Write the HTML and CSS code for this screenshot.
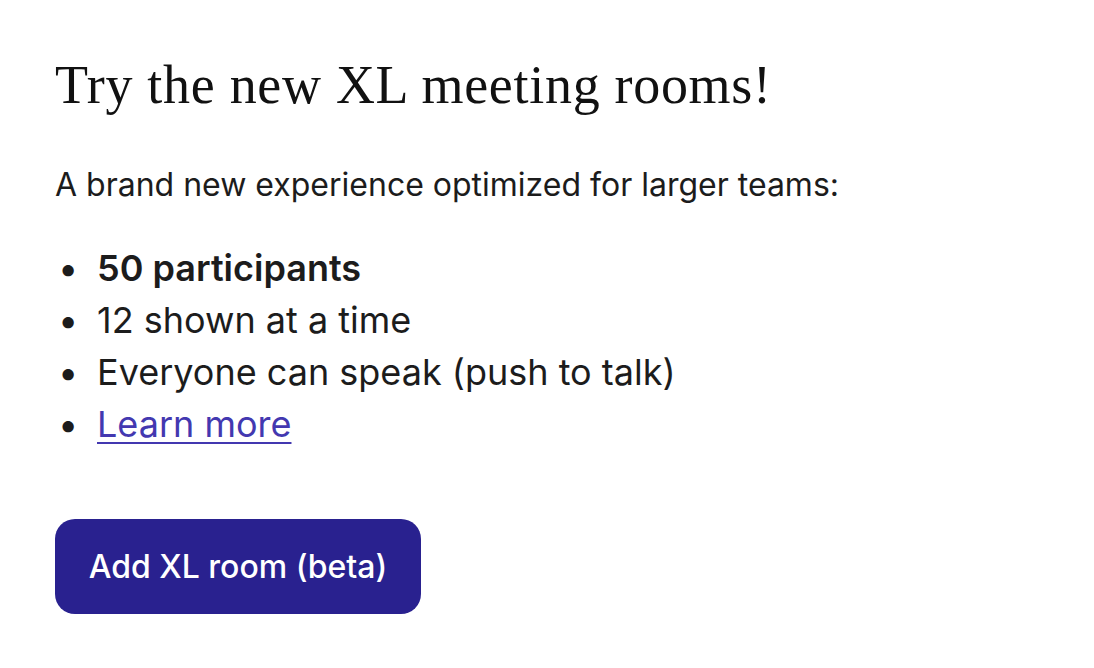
FILE: index.html
```html
<!DOCTYPE html>
<html>
<head>
<meta charset="utf-8">
<link rel="stylesheet" href="styles.css">
</head>
<body>
<div class="card">
  <h1 class="title">Try the new XL meeting rooms!</h1>
  <p class="lead">A brand new experience optimized for larger teams:</p>
  <ul class="features">
    <li><strong>50 participants</strong></li>
    <li>12 shown at a time</li>
    <li>Everyone can speak (push to talk)</li>
    <li><a class="link" href="#">Learn more</a></li>
  </ul>
  <button class="btn">Add XL room (beta)</button>
</div>
</body>
</html>
```
FILE: styles.css
```css
html, body {
  margin: 0;
  padding: 0;
  background: #ffffff;
}
.card {
  padding: 55px 55px;
  font-family: Inter, "Noto Sans", sans-serif;
  color: #1c1c1c;
}
.title {
  margin: 0;
  font-family: "Liberation Serif", "DejaVu Serif", serif;
  font-weight: 400;
  font-size: 54px;
  line-height: 60px;
  letter-spacing: 0.7px;
  color: #111;
}
.lead {
  margin: 50px 0 0;
  font-size: 32px;
  line-height: 40px;
}
.features {
  margin: 37px 0 0;
  padding-left: 42px;
  list-style: none;
  font-size: 36px;
  line-height: 52px;
}
.features li::before {
  content: "\2022";
  display: inline-block;
  box-sizing: border-box;
  width: 42px;
  margin-left: -42px;
  padding-left: 3px;
}
.features strong {
  font-weight: 600;
}
.link {
  color: #4338b0;
  text-decoration: underline;
  text-decoration-thickness: 2px;
  text-underline-offset: 5px;
}
.btn {
  display: block;
  margin-top: 69px;
  width: 366px;
  height: 95px;
  border: none;
  border-radius: 20px;
  background: #29218f;
  color: #fff;
  font-family: Inter, "Noto Sans", sans-serif;
  font-size: 32px;
  font-weight: 500;
}
```
